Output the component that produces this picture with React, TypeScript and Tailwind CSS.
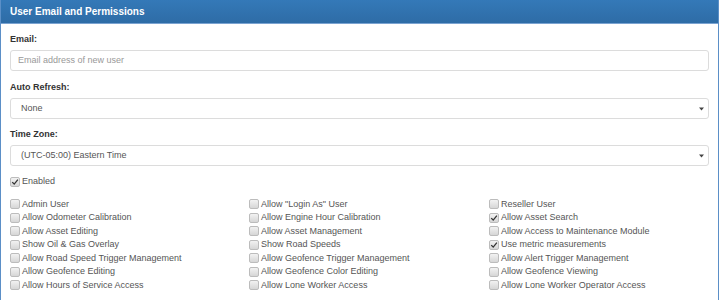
const col1 = [
  { label: "Admin User", on: false },
  { label: "Allow Odometer Calibration", on: false },
  { label: "Allow Asset Editing", on: false },
  { label: "Show Oil & Gas Overlay", on: false },
  { label: "Allow Road Speed Trigger Management", on: false },
  { label: "Allow Geofence Editing", on: false },
  { label: "Allow Hours of Service Access", on: false },
];
const col2 = [
  { label: 'Allow "Login As" User', on: false },
  { label: "Allow Engine Hour Calibration", on: false },
  { label: "Allow Asset Management", on: false },
  { label: "Show Road Speeds", on: false },
  { label: "Allow Geofence Trigger Management", on: false },
  { label: "Allow Geofence Color Editing", on: false },
  { label: "Allow Lone Worker Access", on: false },
];
const col3 = [
  { label: "Reseller User", on: false },
  { label: "Allow Asset Search", on: true },
  { label: "Allow Access to Maintenance Module", on: false },
  { label: "Use metric measurements", on: true },
  { label: "Allow Alert Trigger Management", on: false },
  { label: "Allow Geofence Viewing", on: false },
  { label: "Allow Lone Worker Operator Access", on: false },
];

function Box({ on }: { on: boolean }) {
  return (
    <span className="flex h-[10px] w-[10px] shrink-0 items-center justify-center rounded-[2px] border border-[#bcbcbc] bg-gradient-to-b from-[#f2f2f2] to-[#d6d6d6]">
      {on && (
        <svg viewBox="0 0 10 10" className="h-[8px] w-[8px]">
          <path d="M1.5 5.2 L4 7.6 L8.6 2" fill="none" stroke="#333" strokeWidth="1.6" />
        </svg>
      )}
    </span>
  );
}

function Check({ label, on }: { label: string; on: boolean }) {
  return (
    <label className="flex h-[13.5px] items-center gap-[2px]">
      <Box on={on} />
      <span className="leading-none">{label}</span>
    </label>
  );
}

function Select({ value }: { value: string }) {
  return (
    <div className="flex h-[21px] items-center justify-between rounded-[3px] border border-[#dcdcdc] bg-white pl-[10px] pr-[4px] text-[#555]">
      <span>{value}</span>
      <svg viewBox="0 0 8 5" className="h-[4px] w-[5px]">
        <path d="M0 0 H8 L4 5 Z" fill="#444" />
      </svg>
    </div>
  );
}

export default function App() {
  return (
    <div className="h-[300px] w-[720px] overflow-hidden bg-white font-['Liberation_Sans',Arial,sans-serif] text-[9px]">
      <div className="mr-[1px] h-full border-x border-[#5b8fc7]">
        <div className="flex h-[24px] items-center border-b border-[#7aa3d1] bg-gradient-to-b from-[#3479b8] to-[#2e6ca6] px-[9px] text-[10px] font-bold text-white">
          User Email and Permissions
        </div>
        <div className="px-[9px] pt-[10px]">
          <div className="mb-[4px] flex h-[12px] items-center font-bold text-[#333]">Email:</div>
          <div className="flex h-[21px] items-center rounded-[3px] border border-[#dcdcdc] pl-[7px] text-[#999]">
            Email address of new user
          </div>

          <div className="mb-[4px] mt-[11px] flex h-[12px] items-center font-bold text-[#333]">Auto Refresh:</div>
          <Select value="None" />

          <div className="mb-[4px] mt-[10px] flex h-[12px] items-center font-bold text-[#333]">Time Zone:</div>
          <Select value="(UTC-05:00) Eastern Time" />

          <div className="mt-[9px] text-[#555]">
            <Check label="Enabled" on={true} />
          </div>

          <div className="mt-[9px] grid grid-cols-[239px_240px_1fr] text-[#555]">
            {[col1, col2, col3].map((col, i) => (
              <div key={i} className="flex flex-col">
                {col.map((c) => (
                  <Check key={c.label} label={c.label} on={c.on} />
                ))}
              </div>
            ))}
          </div>
        </div>
      </div>
    </div>
  );
}
